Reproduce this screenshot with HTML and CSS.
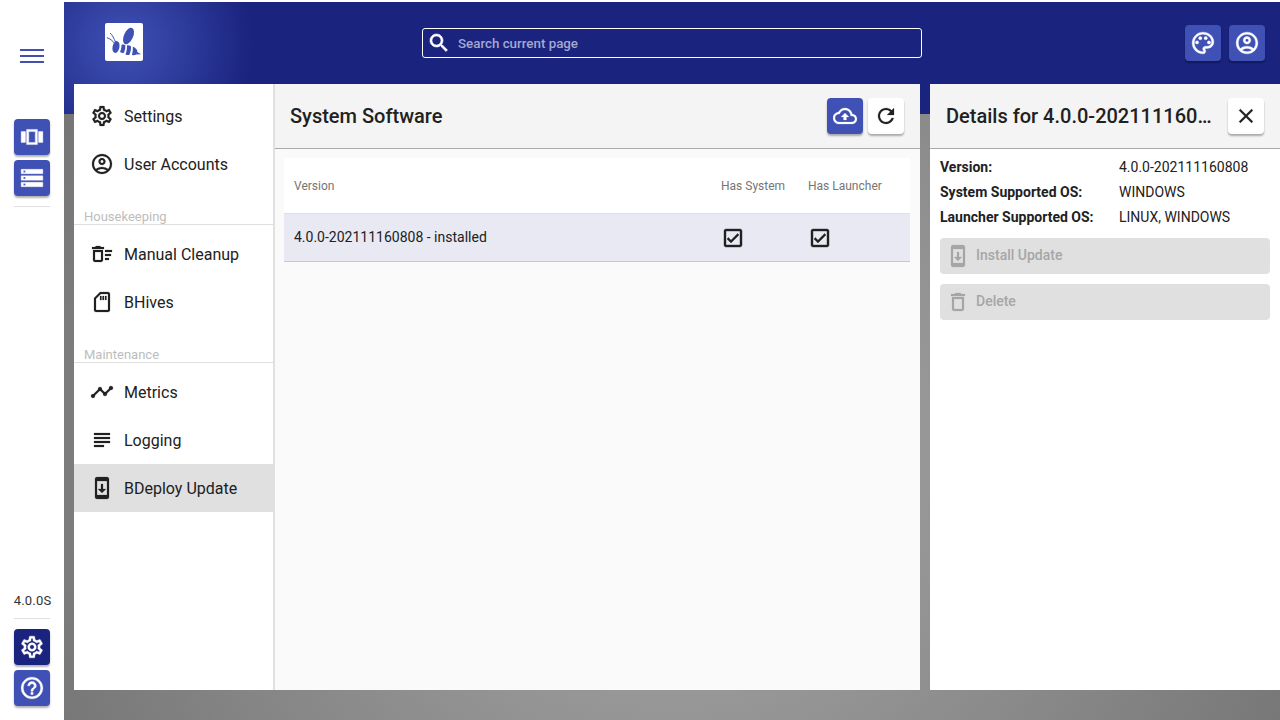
FILE: index.html
```html
<!DOCTYPE html>
<html lang="en">

<head>
    <meta charset="UTF-8">
    <title>BDeploy Update</title>
    <link rel="stylesheet" href="styles.css">
</head>

<body>
    <svg class="icon-defs" width="0" height="0">
        <defs>
            <symbol id="i-settings" viewBox="0 0 24 24"><path d="M19.43 12.98c.04-.32.07-.64.07-.98 0-.34-.03-.66-.07-.98l2.11-1.65c.19-.15.24-.42.12-.64l-2-3.46c-.09-.16-.26-.25-.44-.25-.06 0-.12.01-.17.03l-2.49 1c-.52-.4-1.08-.73-1.69-.98l-.38-2.65C14.46 2.18 14.25 2 14 2h-4c-.25 0-.46.18-.49.42l-.38 2.65c-.61.25-1.17.59-1.69.98l-2.49-1c-.06-.02-.12-.03-.18-.03-.17 0-.34.09-.43.25l-2 3.46c-.13.22-.07.49.12.64l2.11 1.65c-.04.32-.07.65-.07.98 0 .33.03.66.07.98l-2.11 1.65c-.19.15-.24.42-.12.64l2 3.46c.09.16.26.25.44.25.06 0 .12-.01.17-.03l2.49-1c.52.4 1.08.73 1.69.98l.38 2.65c.03.24.24.42.49.42h4c.25 0 .46-.18.49-.42l.38-2.65c.61-.25 1.17-.59 1.69-.98l2.49 1c.06.02.12.03.18.03.17 0 .34-.09.43-.25l2-3.46c.12-.22.07-.49-.12-.64l-2.11-1.65zm-1.98-1.71c.04.31.05.52.05.73 0 .21-.02.43-.05.73l-.14 1.13.89.7 1.08.84-.7 1.21-1.27-.51-1.04-.42-.9.68c-.43.32-.84.56-1.25.73l-1.06.43-.16 1.13-.2 1.35h-1.4l-.19-1.35-.16-1.13-1.06-.43c-.43-.18-.83-.41-1.23-.71l-.91-.7-1.06.43-1.27.51-.7-1.21 1.08-.84.89-.7-.14-1.13c-.03-.31-.05-.54-.05-.74s.02-.43.05-.73l.14-1.13-.89-.7-1.08-.84.7-1.21 1.27.51 1.04.42.9-.68c.43-.32.84-.56 1.25-.73l1.06-.43.16-1.13.2-1.35h1.39l.19 1.35.16 1.13 1.06.43c.43.18.83.41 1.23.71l.91.7 1.06-.43 1.27-.51.7 1.21-1.07.85-.89.7.14 1.13zM12 8c-2.21 0-4 1.79-4 4s1.79 4 4 4 4-1.79 4-4-1.79-4-4-4zm0 6c-1.1 0-2-.9-2-2s.9-2 2-2 2 .9 2 2-.9 2-2 2z"/></symbol>
            <symbol id="i-account" viewBox="0 0 24 24"><path d="M12 2C6.48 2 2 6.48 2 12s4.48 10 10 10 10-4.48 10-10S17.52 2 12 2zM7.35 18.5C8.66 17.56 10.26 17 12 17s3.34.56 4.65 1.5c-1.31.94-2.91 1.5-4.65 1.5s-3.34-.56-4.65-1.5zm10.79-1.38C16.45 15.8 14.32 15 12 15s-4.45.8-6.14 2.12C4.7 15.73 4 13.95 4 12c0-4.42 3.58-8 8-8s8 3.58 8 8c0 1.95-.7 3.73-1.86 5.12z"/><path d="M12 6c-1.93 0-3.5 1.57-3.5 3.5S10.07 13 12 13s3.5-1.57 3.5-3.5S13.93 6 12 6zm0 5c-.83 0-1.5-.67-1.5-1.5S11.17 8 12 8s1.5.67 1.5 1.5S12.83 11 12 11z"/></symbol>
            <symbol id="i-sweep" viewBox="0 0 24 24"><path d="M15 16h4v2h-4zm0-8h7v2h-7zm0 4h6v2h-6zM3 18c0 1.1.9 2 2 2h6c1.1 0 2-.9 2-2V8H3v10zm2-8h6v8H5v-8zm5-6H6L5 5H2v2h12V5h-3z"/></symbol>
            <symbol id="i-sd" viewBox="0 0 24 24"><path d="M18 2h-8L4.02 8 4 20c0 1.1.9 2 2 2h12c1.1 0 2-.9 2-2V4c0-1.1-.9-2-2-2zm0 2v16H6V8.83L10.83 4H18z"/><path d="M10 6h1.500v4H10zm2.500 0H14v4h-1.500zm2.500 0h1.500v4H15z"/></symbol>
            <symbol id="i-timeline" viewBox="0 0 24 24"><path d="M23 8c0 1.100-.9 2-2 2-.18 0-.35-.02-.51-.07l-3.560 3.550c.05.16.07.34.07.52 0 1.100-.9 2-2 2s-2-.9-2-2c0-.18.02-.36.07-.52l-2.550-2.550c-.16.05-.34.07-.52.07s-.36-.02-.52-.07l-4.550 4.560c.05.16.07.33.07.51 0 1.100-.9 2-2 2s-2-.9-2-2 .9-2 2-2c.18 0 .35.02.51.07l4.560-4.550C8.020 9.360 8 9.180 8 9c0-1.100.9-2 2-2s2 .9 2 2c0 .18-.02.36-.07.52l2.550 2.550c.16-.05.34-.07.52-.07s.36.02.52.07l3.550-3.560C19.020 8.350 19 8.180 19 8c0-1.100.9-2 2-2s2 .9 2 2z"/></symbol>
            <symbol id="i-subject" viewBox="0 0 24 24"><path d="M14 17H4v2h10v-2zm6-8H4v2h16V9zM4 15h16v-2H4v2zM4 5v2h16V5H4z"/></symbol>
            <symbol id="i-update" viewBox="0 0 24 24"><path d="M17 1.010L7 1c-1.100 0-2 .9-2 2v18c0 1.100.9 2 2 2h10c1.100 0 2-.9 2-2V3c0-1.100-.9-1.990-2-1.990zM17 19H7V5h10v14zm-1-6h-3V8h-2v5H8l4 4 4-4z"/></symbol>
            <symbol id="i-delete" viewBox="0 0 24 24"><path d="M16 9v10H8V9h8m-1.500-6h-5l-1 1H5v2h14V4h-3.500l-1-1zM18 7H6v12c0 1.100.9 2 2 2h8c1.100 0 2-.9 2-2V7z"/></symbol>
            <symbol id="i-close" viewBox="0 0 24 24"><path d="M19 6.410L17.590 5 12 10.590 6.410 5 5 6.410 10.590 12 5 17.590 6.410 19 12 13.410 17.590 19 19 17.590 13.410 12z"/></symbol>
            <symbol id="i-refresh" viewBox="0 0 24 24"><path d="M17.650 6.350C16.200 4.900 14.210 4 12 4c-4.420 0-7.990 3.580-7.990 8s3.570 8 7.990 8c3.730 0 6.840-2.550 7.730-6h-2.080c-.82 2.330-3.040 4-5.650 4-3.310 0-6-2.690-6-6s2.690-6 6-6c1.660 0 3.140.69 4.220 1.780L13 11h7V4l-2.350 2.350z"/></symbol>
            <symbol id="i-upload" viewBox="0 0 24 24"><path d="M19.350 10.040C18.670 6.590 15.640 4 12 4 9.110 4 6.600 5.640 5.350 8.040 2.340 8.360 0 10.910 0 14c0 3.310 2.690 6 6 6h13c2.760 0 5-2.240 5-5 0-2.640-2.050-4.780-4.650-4.960zM19 18H6c-2.210 0-4-1.790-4-4 0-2.050 1.530-3.760 3.560-3.970l1.070-.11.5-.95C8.080 7.140 9.940 6 12 6c2.620 0 4.880 1.860 5.390 4.430l.3 1.500 1.530.11c1.560.1 2.780 1.410 2.780 2.960 0 1.650-1.350 3-3 3zM8 13h2.550v3h2.900v-3H16l-4-4z"/></symbol>
            <symbol id="i-check" viewBox="0 0 24 24"><path d="M19 3H5c-1.110 0-2 .9-2 2v14c0 1.100.89 2 2 2h14c1.110 0 2-.9 2-2V5c0-1.100-.89-2-2-2zm0 16H5V5h14v14zM17.990 9l-1.410-1.420-6.590 6.590-2.580-2.570-1.420 1.410 4 3.990z"/></symbol>
            <symbol id="i-search" viewBox="0 0 24 24"><path d="M15.500 14h-.79l-.28-.27C15.410 12.590 16 11.110 16 9.500 16 5.910 13.090 3 9.500 3S3 5.910 3 9.500 5.910 16 9.500 16c1.610 0 3.090-.59 4.230-1.570l.27.28v.79l5 4.990L20.490 19l-4.990-5zm-6 0C7.010 14 5 11.990 5 9.500S7.010 5 9.500 5 14 7.010 14 9.500 11.990 14 9.500 14z"/></symbol>
            <symbol id="i-palette" viewBox="0 0 24 24"><path d="M12 22C6.490 22 2 17.510 2 12S6.490 2 12 2s10 4.040 10 9c0 3.310-2.690 6-6 6h-1.770c-.28 0-.5.22-.5.5 0 .12.05.23.13.33.41.47.64 1.060.64 1.670 0 1.380-1.120 2.500-2.500 2.500zm0-18c-4.410 0-8 3.590-8 8s3.590 8 8 8c.28 0 .5-.22.5-.5 0-.16-.08-.28-.14-.35-.41-.46-.63-1.050-.63-1.650 0-1.380 1.120-2.500 2.500-2.500H16c2.210 0 4-1.790 4-4 0-3.860-3.590-7-8-7z"/><circle cx="6.500" cy="11.500" r="1.500"/><circle cx="9.500" cy="7.500" r="1.500"/><circle cx="14.500" cy="7.500" r="1.500"/><circle cx="17.500" cy="11.500" r="1.500"/></symbol>
            <symbol id="i-help" viewBox="0 0 24 24"><path d="M11 18h2v-2h-2v2zm1-16C6.480 2 2 6.480 2 12s4.480 10 10 10 10-4.480 10-10S17.520 2 12 2zm0 18c-4.410 0-8-3.590-8-8s3.590-8 8-8 8 3.590 8 8-3.590 8-8 8zm0-14c-2.210 0-4 1.790-4 4h2c0-1.100.9-2 2-2s2 .9 2 2c0 2-3 1.750-3 5h2c0-2.250 3-2.500 3-5 0-2.210-1.790-4-4-4z"/></symbol>
            <symbol id="i-carousel" viewBox="0 0 24 24"><path d="M2 7h4v10H2V7zm5 12h10V5H7v14zM9 7h6v10H9V7zm9 0h4v10h-4V7z"/></symbol>
            <symbol id="i-storage" viewBox="0 0 24 24"><path d="M2 20h20v-4H2v4zm2-3h2v2H4v-2zM2 4v4h20V4H2zm4 3H4V5h2v2zm-4 7h20v-4H2v4zm2-3h2v2H4v-2z"/></symbol>
        </defs>
    </svg>

    <div class="app">
        <aside class="rail">
            <button class="hamburger" type="button" aria-label="Menu"><span></span><span></span><span></span></button>
            <div class="rail-group">
                <button class="btn btn-primary" type="button"><svg class="icon"><use href="#i-carousel"/></svg></button>
                <button class="btn btn-primary" type="button"><svg class="icon"><use href="#i-storage"/></svg></button>
            </div>
            <div class="rail-rule"></div>
            <div class="rail-fill"></div>
            <div class="rail-version">4.0.0S</div>
            <div class="rail-rule"></div>
            <div class="rail-group">
                <button class="btn btn-dark" type="button"><svg class="icon"><use href="#i-settings"/></svg></button>
                <button class="btn btn-primary" type="button"><svg class="icon"><use href="#i-help"/></svg></button>
            </div>
        </aside>

        <div class="workspace">
            <header class="topbar">
                <div class="logo-box">
                    <svg class="logo" viewBox="0 0 38 38">
                        <ellipse cx="23.500" cy="13" rx="4.600" ry="8.800" transform="rotate(24 23.500 13)"/>
                        <ellipse cx="11" cy="24" rx="3.400" ry="6" transform="rotate(12 11 24)"/>
                        <path d="M16.500 21.800c1.300-.5 2.800-.4 3.800.2.200 3-.4 6-1.800 8.300-1.400-.1-2.600-.5-3.500-1.200 1-2.300 1.500-4.700 1.500-7.300z"/>
                        <path d="M22 22.300c1.500-.2 2.900.2 4 .9.200 3-.4 6-1.800 8.800-1.300.1-2.500-.1-3.700-.6 1.100-2.900 1.600-5.900 1.500-9.100z"/>
                        <path d="M27.800 23.800c2 .6 3.600 2 4.500 3.700 0 1.600-.7 3.300-1.800 4.500-1.200.2-2.300.2-3.500-.1 .7-2.600 1-5.300.8-8.100z"/>
                        <path d="M31.500 28.600L36 31.200l-5 .3z"/>
                        <path class="logo-line" d="M10.500 19C9 15.500 7.500 12 5 10M9.500 20.500C7.500 17.500 5 15.500 1.800 14.700"/>
                    </svg>
                </div>
                <div class="search">
                    <svg class="icon search-icon"><use href="#i-search"/></svg>
                    <span class="search-text">Search current page</span>
                </div>
                <div class="topbar-actions">
                    <button class="btn btn-primary" type="button"><svg class="icon"><use href="#i-palette"/></svg></button>
                    <button class="btn btn-primary" type="button"><svg class="icon"><use href="#i-account"/></svg></button>
                </div>
            </header>

            <div class="content">
                <nav class="nav">
                    <a class="nav-item"><svg class="icon"><use href="#i-settings"/></svg>Settings</a>
                    <a class="nav-item"><svg class="icon"><use href="#i-account"/></svg>User Accounts</a>
                    <div class="nav-title">Housekeeping</div>
                    <a class="nav-item"><svg class="icon"><use href="#i-sweep"/></svg>Manual Cleanup</a>
                    <a class="nav-item"><svg class="icon"><use href="#i-sd"/></svg>BHives</a>
                    <div class="nav-title">Maintenance</div>
                    <a class="nav-item"><svg class="icon"><use href="#i-timeline"/></svg>Metrics</a>
                    <a class="nav-item"><svg class="icon"><use href="#i-subject"/></svg>Logging</a>
                    <a class="nav-item active"><svg class="icon"><use href="#i-update"/></svg>BDeploy Update</a>
                </nav>

                <main class="main">
                    <div class="panel-head main-head">
                        <h1 class="panel-title">System Software</h1>
                        <button class="btn btn-primary" type="button"><svg class="icon"><use href="#i-upload"/></svg></button>
                        <button class="btn btn-plain" type="button"><svg class="icon"><use href="#i-refresh"/></svg></button>
                    </div>
                    <div class="table-wrap">
                        <table class="table">
                            <thead>
                                <tr>
                                    <th>Version</th>
                                    <th class="col-system">Has System</th>
                                    <th class="col-launcher">Has Launcher</th>
                                </tr>
                            </thead>
                            <tbody>
                                <tr>
                                    <td>4.0.0-202111160808 - installed</td>
                                    <td><svg class="icon check"><use href="#i-check"/></svg></td>
                                    <td><svg class="icon check"><use href="#i-check"/></svg></td>
                                </tr>
                            </tbody>
                        </table>
                    </div>
                </main>

                <section class="details">
                    <div class="panel-head">
                        <h2 class="panel-title details-title">Details for 4.0.0-202111160808</h2>
                        <button class="btn btn-plain" type="button"><svg class="icon"><use href="#i-close"/></svg></button>
                    </div>
                    <div class="details-body">
                        <dl class="props">
                            <dt>Version:</dt><dd>4.0.0-202111160808</dd>
                            <dt>System Supported OS:</dt><dd>WINDOWS</dd>
                            <dt>Launcher Supported OS:</dt><dd>LINUX, WINDOWS</dd>
                        </dl>
                        <button class="wide-btn" type="button" disabled><svg class="icon"><use href="#i-update"/></svg><span>Install Update</span></button>
                        <button class="wide-btn" type="button" disabled><svg class="icon"><use href="#i-delete"/></svg><span>Delete</span></button>
                    </div>
                </section>
            </div>
        </div>
    </div>
</body>

</html>
```

FILE: styles.css
```css
* {
    box-sizing: border-box;
}

body {
    margin: 0;
    background-color: #fff;
    font-family: Roboto, "Liberation Sans", sans-serif;
    color: #212121;
}

.icon-defs {
    position: absolute;
}

.icon {
    width: 24px;
    height: 24px;
    fill: currentColor;
    stroke: currentColor;
    stroke-width: 0.2;
    flex: none;
}

.app {
    display: flex;
    height: 720px;
    overflow: hidden;
}

/* left rail */
.rail {
    width: 64px;
    flex: none;
    display: flex;
    flex-direction: column;
    align-items: center;
    padding-bottom: 14px;
    background-color: #fff;
}

.rail .icon,
.topbar-actions .icon {
    width: 26px;
    height: 26px;
    stroke-width: 0.35;
}

.hamburger {
    display: flex;
    flex-direction: column;
    gap: 4px;
    width: 24px;
    margin-top: 49px;
    margin-bottom: 56px;
    padding: 0;
    border: none;
    background: none;
}

.hamburger span {
    display: block;
    height: 2px;
    background-color: #3f51b5;
}

.rail-group {
    display: flex;
    flex-direction: column;
    gap: 5px;
}

.rail-rule {
    width: 36px;
    height: 1px;
    margin: 10px 0;
    background-color: #e0e0e0;
}

.rail-fill {
    flex: 1;
}

.rail-version {
    font-size: 13px;
    line-height: 14px;
    letter-spacing: 0.2px;
    padding-left: 1px;
    color: #333;
}

/* buttons */
.btn {
    width: 36px;
    height: 36px;
    flex: none;
    display: flex;
    align-items: center;
    justify-content: center;
    padding: 0;
    border: none;
    border-radius: 4px;
    box-shadow: 0 2px 2px rgba(0, 0, 0, 0.3);
}

.btn-primary {
    background-color: #3f51b5;
    color: #fff;
}

.btn-dark {
    background-color: #1a237e;
    color: #fff;
}

.btn-plain {
    background-color: #fff;
    color: #212121;
}

/* main area */
.workspace {
    flex: 1;
    min-width: 0;
    display: flex;
    flex-direction: column;
    background: radial-gradient(circle at 50% 62%, #aaa, #717171);
}

.topbar {
    height: 114px;
    flex: none;
    display: flex;
    align-items: flex-start;
    padding-top: 21px;
    padding-left: 41px;
    padding-right: 15px;
    border-top: 2px solid #fff;
    background: radial-gradient(circle 130px at 60px 42px, #3f51b5, #1a237e);
    background-color: #1a237e;
}

.logo-box {
    width: 38px;
    height: 38px;
    flex: none;
    background-color: #fff;
    border-radius: 2px;
}

.logo {
    display: block;
    width: 38px;
    height: 38px;
    fill: #3f51b5;
}

.logo-line {
    fill: none;
    stroke: #3f51b5;
    stroke-width: 1;
}

.search {
    width: 500px;
    height: 30px;
    margin-left: 279px;
    margin-top: 5px;
    display: flex;
    align-items: center;
    gap: 7px;
    padding-left: 4px;
    border: 1px solid #fff;
    border-radius: 3px;
    color: #fff;
}

.search-icon {
    stroke-width: 0.6;
}

.search-text {
    font-size: 13.33px;
    font-weight: 500;
    color: #a4a9d0;
}

.topbar-actions {
    margin-left: auto;
    margin-top: 2px;
    display: flex;
    gap: 8px;
}

.content {
    flex: 1;
    min-height: 0;
    margin-top: -30px;
    display: flex;
    padding: 0 0 30px 10px;
}

/* navigation */
.nav {
    width: 201px;
    flex: none;
    padding-top: 8px;
    background-color: #fff;
    background-clip: padding-box;
    border-right: 2px solid #e0e0e0;
}

.nav-item {
    display: flex;
    align-items: center;
    gap: 10px;
    height: 48px;
    padding-left: 16px;
    font-size: 16px;
}

.nav-item.active {
    background-color: #e0e0e0;
}

.nav-title {
    height: 37px;
    margin-bottom: 5px;
    padding-top: 21px;
    padding-left: 10px;
    font-size: 13px;
    line-height: 15px;
    color: #bdbdbd;
    border-bottom: 1px solid #e0e0e0;
}

.main {
    width: 645px;
    flex: none;
    margin-right: 10px;
    display: flex;
    flex-direction: column;
    background-color: #fafafa;
}

.details {
    flex: 1;
    min-width: 0;
    display: flex;
    flex-direction: column;
    background-color: #fff;
}

.panel-head {
    height: 65px;
    flex: none;
    display: flex;
    align-items: center;
    gap: 5px;
    padding: 0 16px;
    background-color: #f4f4f4;
    border-bottom: 1px solid #aaa;
}

.main-head {
    padding-left: 15px;
}

.panel-title {
    flex: 1;
    min-width: 0;
    margin: 0;
    font-size: 20px;
    font-weight: 500;
    white-space: nowrap;
    overflow: hidden;
    text-overflow: ellipsis;
}

.details-title {
    margin-right: 8px;
}

/* table */
.table-wrap {
    padding: 9px 10px 0 9px;
}

.table {
    width: 100%;
    border-collapse: collapse;
    table-layout: fixed;
    font-size: 14px;
}

.table th {
    height: 55px;
    padding: 2px 10px 0;
    text-align: left;
    font-size: 12px;
    font-weight: 400;
    color: #757575;
    background-color: #fff;
    border-bottom: 1px solid #e0e0e0;
}

.table td {
    height: 48px;
    padding: 0 10px;
    background-color: #e8e9f3;
    border-bottom: 1px solid #c8c8d0;
}

.col-system {
    width: 87px;
}

.col-launcher {
    width: 112px;
}

.check {
    display: block;
    margin-top: 1px;
    stroke-width: 0.4;
}

/* details */
.details-body {
    padding: 5px 10px;
}

.props {
    display: grid;
    grid-template-columns: 179px 1fr;
    grid-auto-rows: 25px;
    align-items: center;
    margin: 0 0 9px;
    font-size: 14px;
}

.props dt {
    font-weight: 700;
}

.props dd {
    margin: 0;
}

.wide-btn {
    width: 100%;
    height: 36px;
    margin-bottom: 10px;
    display: flex;
    align-items: center;
    gap: 6px;
    padding: 0 6px;
    border: none;
    border-radius: 4px;
    background-color: #e0e0e0;
    color: #a6a6a6;
    font-family: inherit;
    font-size: 14px;
    font-weight: 500;
}

.wide-btn span {
    margin-bottom: 2px;
}
```
